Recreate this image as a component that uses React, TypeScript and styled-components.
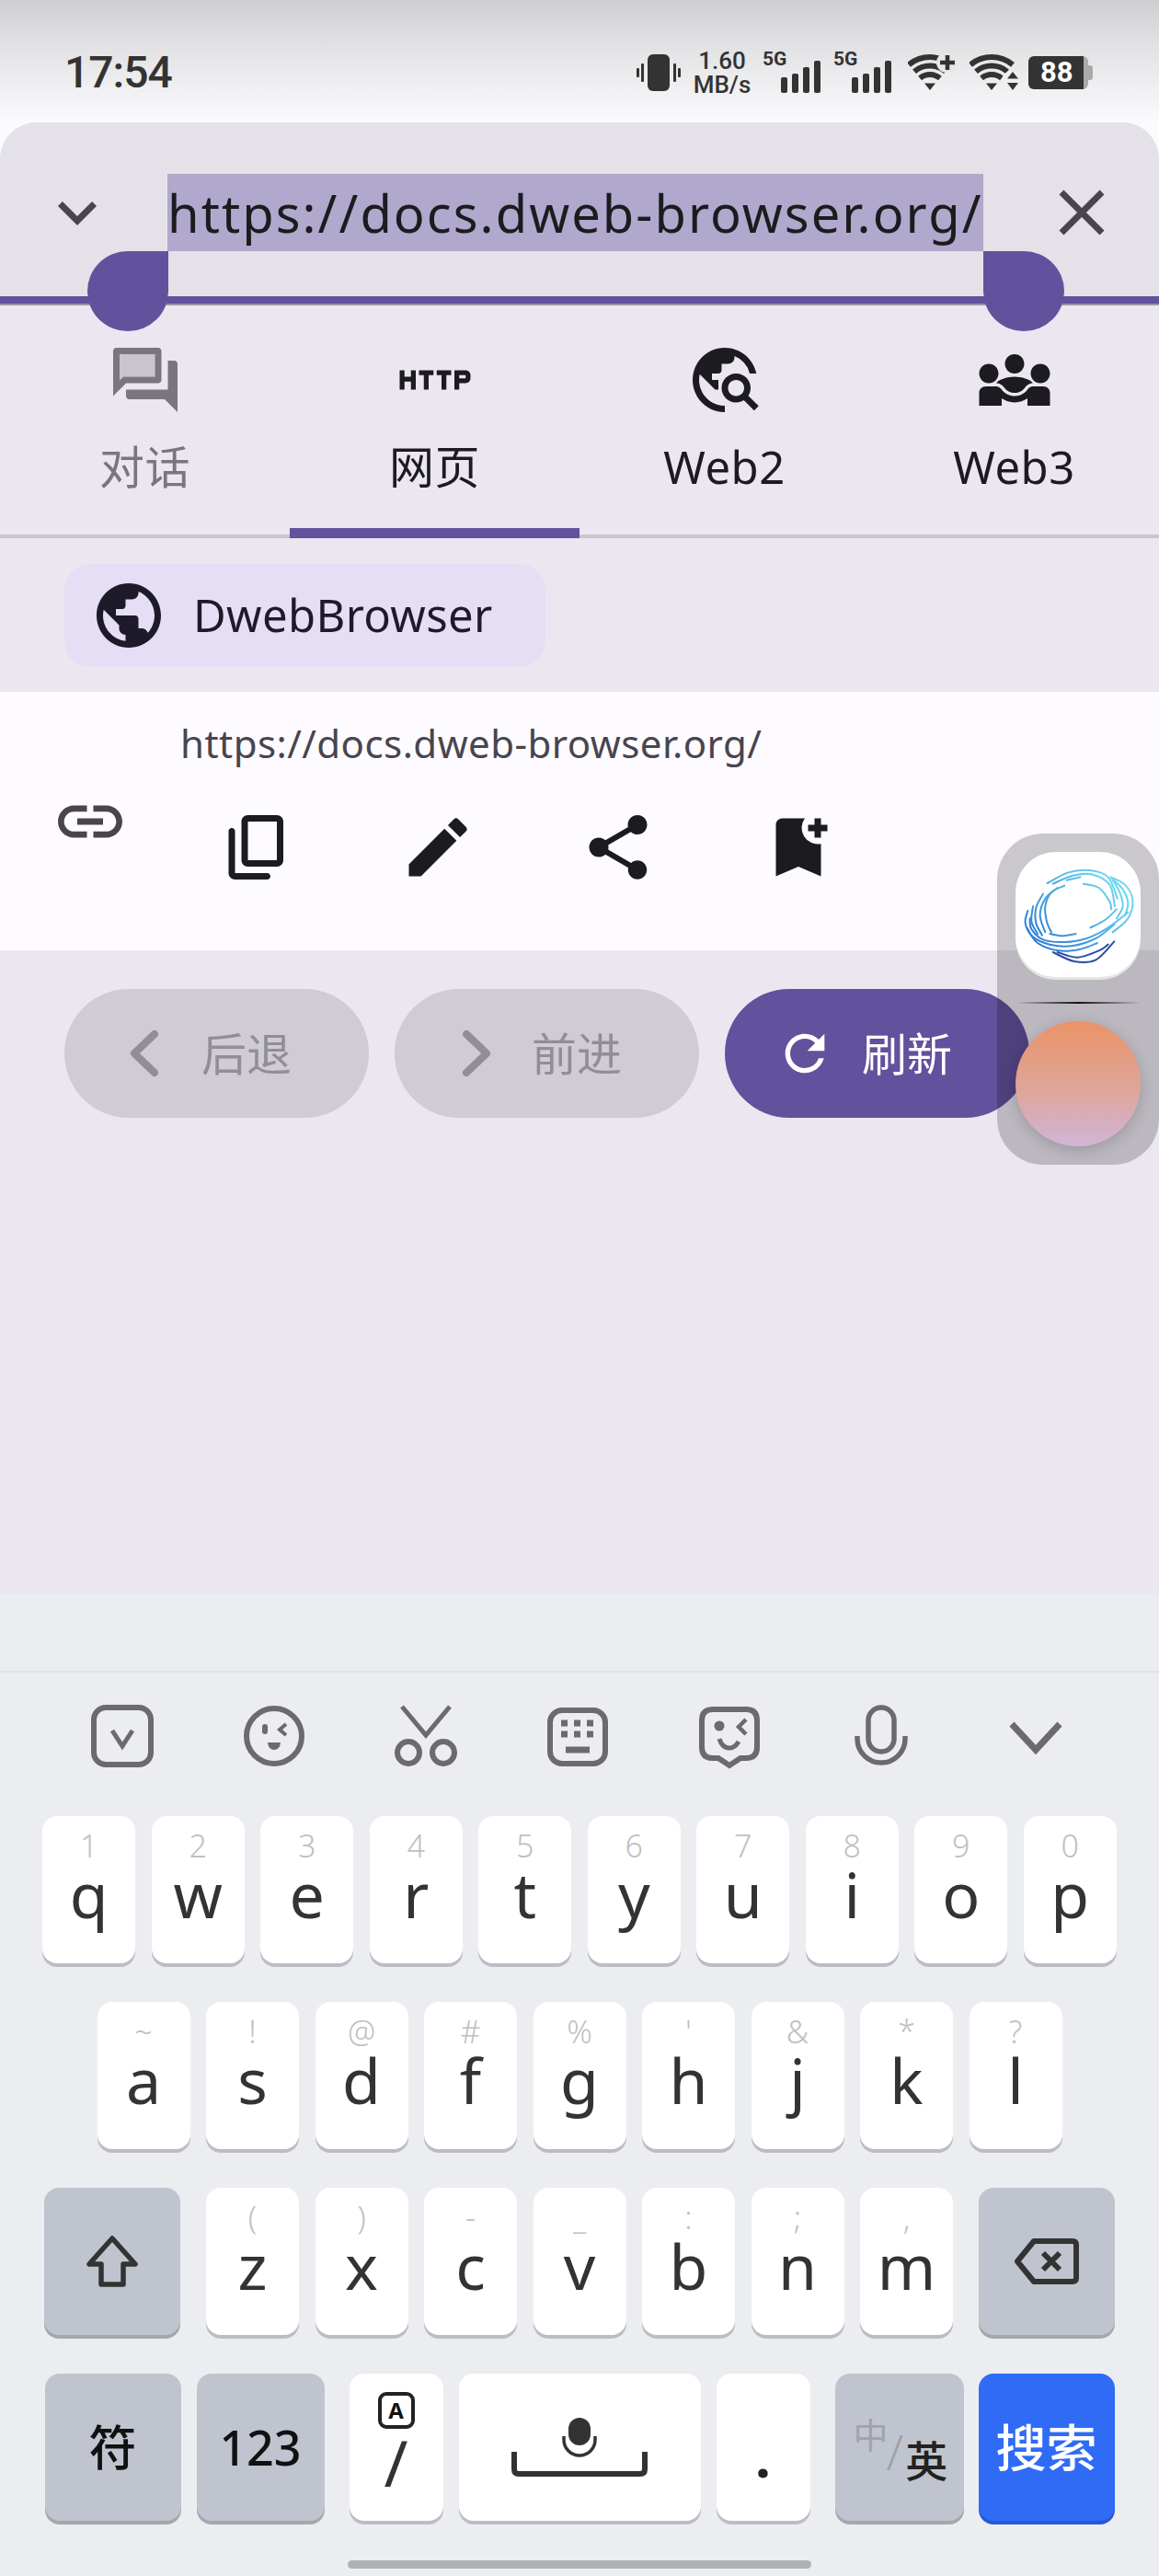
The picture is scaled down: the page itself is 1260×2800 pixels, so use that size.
import React from "react";
import styled, { createGlobalStyle } from "styled-components";
import { MdClose, MdEdit, MdHttp, MdKeyboardArrowDown, MdLink, MdPublic, MdRefresh, MdShare, MdBookmarkAdd, MdTravelExplore, MdDiversity3 } from "react-icons/md";

const CJK = `"Noto Sans", "Noto Sans CJK SC", sans-serif`;

const Global = createGlobalStyle`
  html, body { margin: 0; padding: 0; background: #fbfafc; }
  * { box-sizing: border-box; }
  body { font-family: ${CJK}; }
`;

const Screen = styled.div`
  position: relative;
  width: 1260px;
  height: 2800px;
  overflow: hidden;
  display: flex;
  flex-direction: column;
  background: #fbfafc;
`;

const StatusBar = styled.div`
  height: 133px;
  flex: none;
  display: flex;
  align-items: center;
  justify-content: space-between;
  padding: 25px 70px 0;
  color: #333;
  background: linear-gradient(180deg, #cfced0 0%, #e3e2e4 40%, #fbfafc 100%);
  font-family: Roboto, sans-serif;
`;

const Time = styled.div`
  font-size: 48px;
  font-weight: 500;
  line-height: 60px;
  letter-spacing: -1px;
`;

const StatusIcons = styled.div`
  display: flex;
  align-items: center;
  height: 50px;
`;

const Speed = styled.div`
  width: 62px;
  margin: 0 13px 0 14px;
  display: flex;
  flex-direction: column;
  align-items: center;
  font-size: 26px;
  font-weight: 500;
  line-height: 26px;
  white-space: nowrap;
  & > span { display: block; }
`;

const SignalBox = styled.div`
  position: relative;
  flex: none;
  width: 64px;
  height: 44px;
  margin-right: 13px;
`;

const SignalLabel = styled.span`
  position: absolute;
  left: 0;
  top: -5px;
  font-size: 21px;
  font-weight: 700;
  line-height: 24px;
`;

const SignalBars = styled.svg`
  position: absolute;
  right: 0;
  bottom: 0;
`;

const WifiSlot = styled.div<{ $left: number }>`
  flex: none;
  display: flex;
  margin-left: ${(p) => p.$left}px;
`;

const Battery = styled.div`
  width: 72px;
  height: 36px;
  flex: none;
  margin-left: 10px;
  display: flex;
  align-items: center;
`;

const BatteryBody = styled.div`
  width: 65px;
  height: 36px;
  border-radius: 6px;
  background: linear-gradient(90deg, #333 0 92%, #aaa 92% 100%);
  color: #fff;
  font-size: 31px;
  font-weight: 700;
  line-height: 36px;
  padding-left: 13px;
`;

const BatteryNub = styled.div`
  width: 5px;
  height: 16px;
  border-radius: 0 3px 3px 0;
  background: #aaa;
`;

const Sheet = styled.div`
  flex: none;
  height: 1599px;
  display: flex;
  flex-direction: column;
  background: #ebe6f0;
  border-radius: 40px 40px 0 0;
  overflow: hidden;
`;

const AddressBar = styled.div`
  position: relative;
  height: 199px;
  flex: none;
  display: flex;
  align-items: flex-start;
  padding: 56px 42px 0;
  background: #e5e1e8;
  border-bottom: 2px solid #9a94a8;
  box-shadow: inset 0 -8px 0 #62519c;
  color: #48454e;
`;

const BarIcon = styled.div`
  width: 84px;
  height: 84px;
  flex: none;
  display: flex;
  align-items: center;
  justify-content: center;
  font-size: 84px;
`;

const SelectedText = styled.div`
  width: 887px;
  height: 84px;
  margin: 0 65px 0 56px;
  flex: none;
  background: #b1a8cd;
  color: #1c1b1f;
  font-size: 56px;
  line-height: 84px;
  letter-spacing: 2.05px;
  white-space: nowrap;
  overflow: hidden;
`;

const Handle = styled.div<{ $side: "left" | "right" }>`
  position: absolute;
  top: 140px;
  left: ${(p) => (p.$side === "left" ? "95px" : "1069px")};
  width: 88px;
  height: 87px;
  background: #62519c;
  border-radius: ${(p) => (p.$side === "left" ? "50% 0 50% 50%" : "0 50% 50% 50%")};
  z-index: 2;
`;

const Tabs = styled.div`
  flex: none;
  height: 253px;
  display: grid;
  grid-template-columns: repeat(4, 315px);
  border-bottom: 4px solid #cac5cd;
`;

const Tab = styled.div<{ $muted?: boolean; $active?: boolean }>`
  position: relative;
  display: flex;
  flex-direction: column;
  align-items: center;
  padding-top: 39px;
  color: ${(p) => (p.$muted ? "#79767d" : "#1c1b1f")};
  font-size: 84px;
  ${(p) =>
    p.$active
      ? `&::after {
    content: "";
    position: absolute;
    left: 0;
    right: 0;
    bottom: -4px;
    height: 11px;
    background: #62519c;
  }`
      : ""}
`;

const TabLabel = styled.div`
  margin-top: 19px;
  font-size: 49px;
  line-height: 66px;
  letter-spacing: 0.5px;
`;

const ChipRow = styled.div`
  flex: none;
  height: 167px;
  padding: 28px 70px 0;
`;

const Chip = styled.div`
  width: 523px;
  height: 112px;
  display: flex;
  align-items: center;
  padding: 0 0 0 28px;
  gap: 28px;
  border-radius: 28px;
  background: #e5def5;
  color: #1d1b29;
  font-size: 49px;
  letter-spacing: 0.35px;
  & > svg { font-size: 84px; flex: none; }
`;

const ChipLabel = styled.span`
  margin-top: -3px;
`;

const Panel = styled.div`
  flex: none;
  height: 281px;
  display: flex;
  align-items: center;
  padding-left: 56px;
  gap: 56px;
  background: #fdfbff;
`;

const LinkGlyph = styled.div`
  width: 84px;
  height: 84px;
  font-size: 84px;
  color: #48454e;
  display: flex;
`;

const PanelBody = styled.div`
  align-self: stretch;
  padding-top: 28px;
  display: flex;
  flex-direction: column;
`;

const PanelUrl = styled.div`
  height: 56px;
  font-size: 42px;
  line-height: 56px;
  color: #48454e;
  letter-spacing: 0.45px;
  white-space: nowrap;
`;

const ActionRow = styled.div`
  display: flex;
  gap: 112px;
  margin: 43px 0 0 42px;
  color: #1c1b1f;
  font-size: 84px;
  & > svg { flex: none; display: block; }
`;

const ButtonRow = styled.div`
  flex: none;
  display: flex;
  gap: 28px;
  padding: 42px 0 0 70px;
`;

const PillButton = styled.div<{ $primary?: boolean }>`
  width: 331px;
  height: 140px;
  display: flex;
  align-items: center;
  padding-left: 55px;
  gap: 30px;
  border-radius: 70px;
  background: ${(p) => (p.$primary ? "#62519c" : "#cfccd6")};
  color: ${(p) => (p.$primary ? "#fff" : "#918e98")};
  font-size: 49px;
  & > svg { flex: none; }
`;

const PillLabel = styled.span`
  margin-top: -6px;
`;

const Floater = styled.div`
  position: absolute;
  left: 1084px;
  top: 906px;
  width: 176px;
  height: 360px;
  padding: 20px;
  border-radius: 50px;
  background: rgba(0, 0, 0, 0.2);
  display: flex;
  flex-direction: column;
  z-index: 3;
`;

const AppTile = styled.div`
  width: 136px;
  height: 136px;
  flex: none;
  border-radius: 44px;
  background: #fff;
  box-shadow: 0 3px 0 #e6e5e4;
  overflow: hidden;
  & > svg { display: block; }
`;

const FloatRule = styled.div`
  height: 2px;
  flex: none;
  margin: 27px 0 19px;
  background: linear-gradient(90deg, transparent, #111 50%, transparent);
`;

const Avatar = styled.div`
  width: 136px;
  height: 136px;
  flex: none;
  border-radius: 50%;
  background: linear-gradient(180deg, #ea9367 0%, #dfa59a 55%, #d0b5d9 100%);
  box-shadow: 0 4px 16px rgba(0, 0, 0, 0.18);
`;

const Keyboard = styled.div`
  flex: 1;
  display: flex;
  flex-direction: column;
  background: #ecedf1;
`;

const Candidates = styled.div`
  height: 86px;
  flex: none;
  border-bottom: 2px solid #e1e2e6;
`;

const ToolRow = styled.div`
  display: flex;
  gap: 85px;
  padding: 29px 0 47px 93px;
  & > svg { flex: none; display: block; }
`;

const KeyRows = styled.div`
  display: flex;
  flex-direction: column;
  gap: 42px;
`;

const KeyRow = styled.div<{ $gap: number }>`
  display: flex;
  justify-content: center;
  gap: ${(p) => p.$gap}px;
`;

const KeyGroup = styled.div<{ $gap: number }>`
  display: flex;
  gap: ${(p) => p.$gap}px;
`;

const KeyCap = styled.div<{ $w?: number; $tone?: "light" | "dark" | "blue" }>`
  width: ${(p) => p.$w ?? 101}px;
  height: 160px;
  flex: none;
  border-radius: 16px;
  display: flex;
  flex-direction: column;
  align-items: center;
  justify-content: center;
  background: ${(p) => (p.$tone === "dark" ? "#c0c4ce" : p.$tone === "blue" ? "#2f6bf5" : "#fff")};
  box-shadow: 0 4px 0 ${(p) => (p.$tone === "dark" ? "#a5a6ae" : p.$tone === "blue" ? "#2759d0" : "#bcbdc3")};
  color: ${(p) => (p.$tone === "blue" ? "#fff" : "#111")};
`;

const LetterKey = styled(KeyCap)`
  justify-content: flex-start;
  padding-top: 14px;
`;

const Hint = styled.span`
  height: 36px;
  font-size: 34px;
  line-height: 36px;
  color: #c0c0c2;
  font-weight: 300;
`;

const Letter = styled.span`
  margin-top: 2px;
  height: 66px;
  font-size: 68px;
  line-height: 66px;
  color: #333;
`;

const LabelText = styled.span<{ $size: number }>`
  font-size: ${(p) => p.$size}px;
  line-height: 60px;
  font-weight: 500;
`;

const SlashKey = styled(KeyCap)`
  justify-content: flex-start;
  padding-top: 20px;
`;

const ABadge = styled.span`
  width: 40px;
  height: 40px;
  border: 4px solid #222;
  border-radius: 9px;
  font-size: 24px;
  font-weight: 700;
  line-height: 32px;
  text-align: center;
`;

const SlashGlyph = styled.span`
  margin-top: -2px;
  font-size: 70px;
  line-height: 76px;
  color: #333;
`;

const DotGlyph = styled.span`
  margin-top: 20px;
  font-size: 60px;
  line-height: 66px;
  font-weight: 700;
  color: #222;
`;

const LangKey = styled(KeyCap)`
  flex-direction: row;
  align-items: flex-start;
  justify-content: flex-start;
  padding: 0 0 0 20px;
`;

const LangMain = styled.span`
  margin: 41px 0 0 0;
  font-size: 38px;
  line-height: 50px;
  color: #a0a3ab;
`;

const LangSlash = styled.span`
  margin: 54px 0 0 -2px;
  font-size: 54px;
  line-height: 60px;
  font-weight: 300;
  color: #a0a3ab;
`;

const LangAlt = styled.span`
  margin: 66px 0 0 2px;
  font-size: 46px;
  line-height: 56px;
  font-weight: 500;
  color: #222;
`;

const HomeBar = styled.div`
  width: 504px;
  height: 9px;
  margin: 43px auto 0;
  border-radius: 5px;
  background: #b0b1b5;
`;

const ForumTwoTone = () => (
  <svg width="84" height="84" viewBox="0 0 24 24" fill="currentColor">
    <path opacity="0.3" d="M15 11V4H4v8.17l.59-.58.58-.59H6z" />
    <path d="M21 6h-2v9H6v2c0 .55.45 1 1 1h11l4 4V7c0-.55-.45-1-1-1zm-5 7c.55 0 1-.45 1-1V3c0-.55-.45-1-1-1H3c-.55 0-1 .45-1 1v14l4-4h10zM4.59 11.59l-.59.58V4h11v7H5.17l-.58.59z" />
  </svg>
);

const CopyRounded = () => (
  <svg width="84" height="84" viewBox="0 0 24 24" fill="currentColor">
    <path d="M15 20H5V7c0-.55-.45-1-1-1s-1 .45-1 1v13c0 1.1.9 2 2 2h10c.55 0 1-.45 1-1s-.45-1-1-1zm5-4V4c0-1.1-.9-2-2-2H9c-1.1 0-2 .9-2 2v12c0 1.1.9 2 2 2h9c1.1 0 2-.9 2-2zm-2 0H9V4h9v12z" />
  </svg>
);

const Chevron = ({ dir }: { dir: "left" | "right" }) => (
  <svg width="64" height="64" viewBox="0 0 64 64" fill="none" stroke="currentColor" strokeWidth="8" strokeLinecap="round" strokeLinejoin="round">
    <path d={dir === "left" ? "M43 11 L21 32 L43 53" : "M23 11 L45 32 L23 53"} />
  </svg>
);

const VibrateIcon = () => (
  <svg width="48" height="40" viewBox="0 0 48 40" fill="#333">
    <rect x="12" y="0" width="24" height="40" rx="6" />
    <rect x="5" y="10" width="3" height="20" rx="1" />
    <rect x="0" y="15" width="3" height="10" rx="1" />
    <rect x="40" y="10" width="3" height="20" rx="1" />
    <rect x="45" y="15" width="3" height="10" rx="1" />
  </svg>
);

const Bars = () => (
  <SignalBars width="44" height="35" viewBox="0 0 44 35" fill="#333">
    <rect x="0" y="18" width="7" height="17" rx="2" />
    <rect x="12" y="14" width="7" height="21" rx="2" />
    <rect x="24" y="7" width="7" height="28" rx="2" />
    <rect x="36" y="0" width="7" height="35" rx="2" />
  </SignalBars>
);

const WifiArcs = () => (
  <g fill="none" stroke="#333" strokeWidth="6">
    <path d="M1 11.4 A36 36 0 0 1 47 11.4" />
    <path d="M7 18.7 A26.5 26.5 0 0 1 41 18.7" />
    <path d="M13.1 26 A17 17 0 0 1 34.9 26" />
    <path d="M18 31.5 L30 31.5 L24 39 Z" fill="#333" stroke="none" />
  </g>
);

const WifiPlus = () => (
  <svg width="52" height="40" viewBox="0 0 52 40">
    <WifiArcs />
    <circle cx="42" cy="9" r="11" fill="#e6e5e7" />
    <path d="M35 9 H51 M43 1 V17" stroke="#333" strokeWidth="4.5" />
  </svg>
);

const WifiUpDown = () => (
  <svg width="54" height="40" viewBox="0 0 54 40">
    <WifiArcs />
    <circle cx="46" cy="29" r="11" fill="#efeef0" />
    <path d="M41 26.5 L47 19 L53 26.5 Z M41 31 L53 31 L47 39 Z" fill="#333" />
  </svg>
);

type Stroke = { pts: number[][]; dark?: boolean };

const orbitStrokes: Stroke[] = [
  { pts: [[132,120],[200,85],[270,78],[330,100],[360,170]] },
  { pts: [[150,122],[215,95],[280,92],[335,125],[352,195]] },
  { pts: [[195,110],[240,100]] },
  { pts: [[250,122],[300,135],[335,180],[340,205]] },
  { pts: [[338,100],[385,125],[410,175],[395,235],[345,280]] },
  { pts: [[342,105],[378,140],[395,185],[385,225]] },
  { pts: [[345,110],[368,150],[378,195],[358,235]] },
  { pts: [[272,265],[320,240],[358,205]] },
  { pts: [[140,285],[180,292],[225,285]] },
  { pts: [[68,210],[60,250],[85,295],[140,320],[210,325],[290,300],[350,255]] },
  { pts: [[75,235],[80,270],[120,305],[190,312],[260,300],[330,265],[395,215]] },
  { pts: [[65,265],[100,315],[170,340],[240,335],[295,315]] },
  { pts: [[188,128],[145,150],[125,195],[130,245],[145,280]] },
  { pts: [[165,135],[125,170],[108,225],[125,280]] },
  { pts: [[118,155],[95,200],[95,250],[115,290]] },
  { pts: [[85,195],[80,245],[100,285]] },
  { pts: [[150,345],[220,375],[290,370],[350,310]], dark: true },
  { pts: [[165,345],[230,362],[300,340],[330,320]], dark: true },
];

const smoothPath = (pts: number[][]) => {
  let d = `M${pts[0][0]} ${pts[0][1]}`;
  for (let i = 0; i < pts.length - 1; i++) {
    const p0 = pts[Math.max(0, i - 1)];
    const p1 = pts[i];
    const p2 = pts[i + 1];
    const p3 = pts[Math.min(pts.length - 1, i + 2)];
    const c1x = p1[0] + (p2[0] - p0[0]) / 6;
    const c1y = p1[1] + (p2[1] - p0[1]) / 6;
    const c2x = p2[0] - (p3[0] - p1[0]) / 6;
    const c2y = p2[1] - (p3[1] - p1[1]) / 6;
    d += ` C${c1x.toFixed(1)} ${c1y.toFixed(1)} ${c2x.toFixed(1)} ${c2y.toFixed(1)} ${p2[0]} ${p2[1]}`;
  }
  return d;
};

const OrbitLogo = () => (
  <svg width="136" height="136" viewBox="28 18 408 408" fill="none" strokeLinecap="round">
    <defs>
      <linearGradient id="orbit" gradientUnits="userSpaceOnUse" x1="340" y1="100" x2="110" y2="310">
        <stop offset="0" stopColor="#6fd8ef" />
        <stop offset="0.45" stopColor="#4fb0e6" />
        <stop offset="1" stopColor="#2f7fd4" />
      </linearGradient>
    </defs>
    {orbitStrokes.map((s, i) => (
      <path key={i} d={smoothPath(s.pts)} stroke={s.dark ? "#2a4da3" : "url(#orbit)"} strokeWidth="6" />
    ))}
  </svg>
);

const Tool = ({ children }: { children: React.ReactNode }) => (
  <svg width="80" height="80" viewBox="0 0 80 80" fill="none" stroke="#6b6b6b" strokeWidth="6">
    {children}
  </svg>
);

const ShiftIcon = () => (
  <svg width="60" height="60" viewBox="0 0 60 60" fill="none" stroke="#333" strokeWidth="5.5" strokeLinejoin="round">
    <path d="M30 5 L55 33 H42 V55 H18 V33 H5 Z" />
  </svg>
);

const BackspaceIcon = () => (
  <svg width="72" height="52" viewBox="0 0 72 52" fill="none" stroke="#333" strokeWidth="6" strokeLinejoin="round">
    <path d="M22 4 H64 Q68 4 68 8 V44 Q68 48 64 48 H22 L4 26 Z" />
    <path d="M32 17 L50 35 M50 17 L32 35" strokeWidth="6" />
  </svg>
);

const SpaceIcon = () => (
  <svg width="150" height="64" viewBox="0 0 150 64" fill="none" stroke="#333" strokeWidth="6">
    <rect x="63" y="0" width="24" height="30" rx="12" fill="#333" stroke="none" />
    <path d="M58 20 V24 A17 17 0 0 0 92 24 V20" strokeWidth="3.5" />
    <path d="M4 37 V56 Q4 61 9 61 H141 Q146 61 146 56 V37" />
  </svg>
);

const row1: [string, string][] = [["1","q"],["2","w"],["3","e"],["4","r"],["5","t"],["6","y"],["7","u"],["8","i"],["9","o"],["0","p"]];
const row2: [string, string][] = [["~","a"],["!","s"],["@","d"],["#","f"],["%","g"],["'","h"],["&","j"],["*","k"],["?","l"]];
const row3: [string, string][] = [["(","z"],[")","x"],["-","c"],["_","v"],[":","b"],[";","n"],[",","m"]];

const Letters = ({ keys }: { keys: [string, string][] }) => (
  <>
    {keys.map(([h, l]) => (
      <LetterKey key={l}>
        <Hint>{h}</Hint>
        <Letter>{l}</Letter>
      </LetterKey>
    ))}
  </>
);

export default function App() {
  return (
    <Screen>
      <Global />
      <StatusBar>
        <Time>17:54</Time>
        <StatusIcons>
          <VibrateIcon />
          <Speed>
            <span>1.60</span>
            <span>MB/s</span>
          </Speed>
          <SignalBox>
            <SignalLabel>5G</SignalLabel>
            <Bars />
          </SignalBox>
          <SignalBox>
            <SignalLabel>5G</SignalLabel>
            <Bars />
          </SignalBox>
          <WifiSlot $left={4}><WifiPlus /></WifiSlot>
          <WifiSlot $left={15}><WifiUpDown /></WifiSlot>
          <Battery>
            <BatteryBody>88</BatteryBody>
            <BatteryNub />
          </Battery>
        </StatusIcons>
      </StatusBar>
      <Sheet>
        <AddressBar>
          <BarIcon><MdKeyboardArrowDown /></BarIcon>
          <SelectedText>https://docs.dweb-browser.org/</SelectedText>
          <BarIcon><MdClose /></BarIcon>
          <Handle $side="left" />
          <Handle $side="right" />
        </AddressBar>
        <Tabs>
          <Tab $muted>
            <ForumTwoTone />
            <TabLabel>对话</TabLabel>
          </Tab>
          <Tab $active>
            <MdHttp />
            <TabLabel>网页</TabLabel>
          </Tab>
          <Tab>
            <MdTravelExplore />
            <TabLabel>Web2</TabLabel>
          </Tab>
          <Tab>
            <MdDiversity3 />
            <TabLabel>Web3</TabLabel>
          </Tab>
        </Tabs>
        <ChipRow>
          <Chip>
            <MdPublic />
            <ChipLabel>DwebBrowser</ChipLabel>
          </Chip>
        </ChipRow>
        <Panel>
          <LinkGlyph><MdLink /></LinkGlyph>
          <PanelBody>
            <PanelUrl>https://docs.dweb-browser.org/</PanelUrl>
            <ActionRow>
              <CopyRounded />
              <MdEdit />
              <MdShare />
              <MdBookmarkAdd />
            </ActionRow>
          </PanelBody>
        </Panel>
        <ButtonRow>
          <PillButton>
            <Chevron dir="left" />
            <PillLabel>后退</PillLabel>
          </PillButton>
          <PillButton>
            <Chevron dir="right" />
            <PillLabel>前进</PillLabel>
          </PillButton>
          <PillButton $primary>
            <MdRefresh size={64} />
            <PillLabel>刷新</PillLabel>
          </PillButton>
        </ButtonRow>
      </Sheet>
      <Keyboard>
        <Candidates />
        <ToolRow>
          <Tool>
            <rect x="9" y="9" width="62" height="62" rx="13" />
            <path d="M29 34 L40 51 L51 34" strokeWidth="5" />
          </Tool>
          <Tool>
            <circle cx="40" cy="40" r="30" />
            <rect x="27" y="27" width="6" height="11" rx="3" fill="#6b6b6b" stroke="none" />
            <path d="M53 27 L46 33 L53 39" strokeWidth="4" />
            <path d="M33 47 H47 Q46 55 40 55 Q34 55 33 47 Z" fill="#6b6b6b" stroke="none" />
          </Tool>
          <Tool>
            <path d="M14 8 L40 39 L66 8" strokeWidth="5" />
            <circle cx="21" cy="58" r="12" />
            <circle cx="59" cy="58" r="12" />
          </Tool>
          <Tool>
            <rect x="10" y="12" width="60" height="58" rx="13" />
            <path d="M22 26 H59 M22 38 H59" strokeWidth="7" strokeDasharray="7 7" />
            <path d="M27 55 H53" strokeWidth="7" />
          </Tool>
          <Tool>
            <path d="M22 11 H58 Q70 11 70 23 V52 Q70 64 58 64 H52 L40 72 L28 64 H22 Q10 64 10 52 V23 Q10 11 22 11 Z" />
            <circle cx="29" cy="29" r="5.5" fill="#6b6b6b" stroke="none" />
            <path d="M58 22 L50 30 L58 38" strokeWidth="4.5" />
            <path d="M29 43 Q32 53 40 53 Q46 53 50 46" strokeWidth="5" />
          </Tool>
          <Tool>
            <rect x="26" y="9" width="28" height="48" rx="14" strokeWidth="5.5" />
            <path d="M14 40 V43 A26 26 0 0 0 66 43 V40" strokeWidth="5.5" />
          </Tool>
          <Tool>
            <path d="M17 27 L43 55 L69 27" strokeWidth="7" />
          </Tool>
        </ToolRow>
        <KeyRows>
          <KeyRow $gap={17.5}>
            <Letters keys={row1} />
          </KeyRow>
          <KeyRow $gap={17.5}>
            <Letters keys={row2} />
          </KeyRow>
          <KeyRow $gap={28}>
            <KeyCap $w={148} $tone="dark"><ShiftIcon /></KeyCap>
            <KeyGroup $gap={17.5}>
              <Letters keys={row3} />
            </KeyGroup>
            <KeyCap $w={148} $tone="dark"><BackspaceIcon /></KeyCap>
          </KeyRow>
          <KeyRow $gap={27}>
            <KeyGroup $gap={17}>
              <KeyCap $w={148} $tone="dark"><LabelText $size={52}>符</LabelText></KeyCap>
              <KeyCap $w={139} $tone="dark"><LabelText $size={52}>123</LabelText></KeyCap>
            </KeyGroup>
            <KeyGroup $gap={17}>
              <SlashKey $w={102}>
                <ABadge>A</ABadge>
                <SlashGlyph>/</SlashGlyph>
              </SlashKey>
              <KeyCap $w={263}><SpaceIcon /></KeyCap>
              <KeyCap $w={102}><DotGlyph>.</DotGlyph></KeyCap>
            </KeyGroup>
            <KeyGroup $gap={16}>
              <LangKey $w={140} $tone="dark">
                <LangMain>中</LangMain>
                <LangSlash>/</LangSlash>
                <LangAlt>英</LangAlt>
              </LangKey>
              <KeyCap $w={148} $tone="blue"><LabelText $size={55}>搜索</LabelText></KeyCap>
            </KeyGroup>
          </KeyRow>
        </KeyRows>
        <HomeBar />
      </Keyboard>
      <Floater>
        <AppTile><OrbitLogo /></AppTile>
        <FloatRule />
        <Avatar />
      </Floater>
    </Screen>
  );
}
